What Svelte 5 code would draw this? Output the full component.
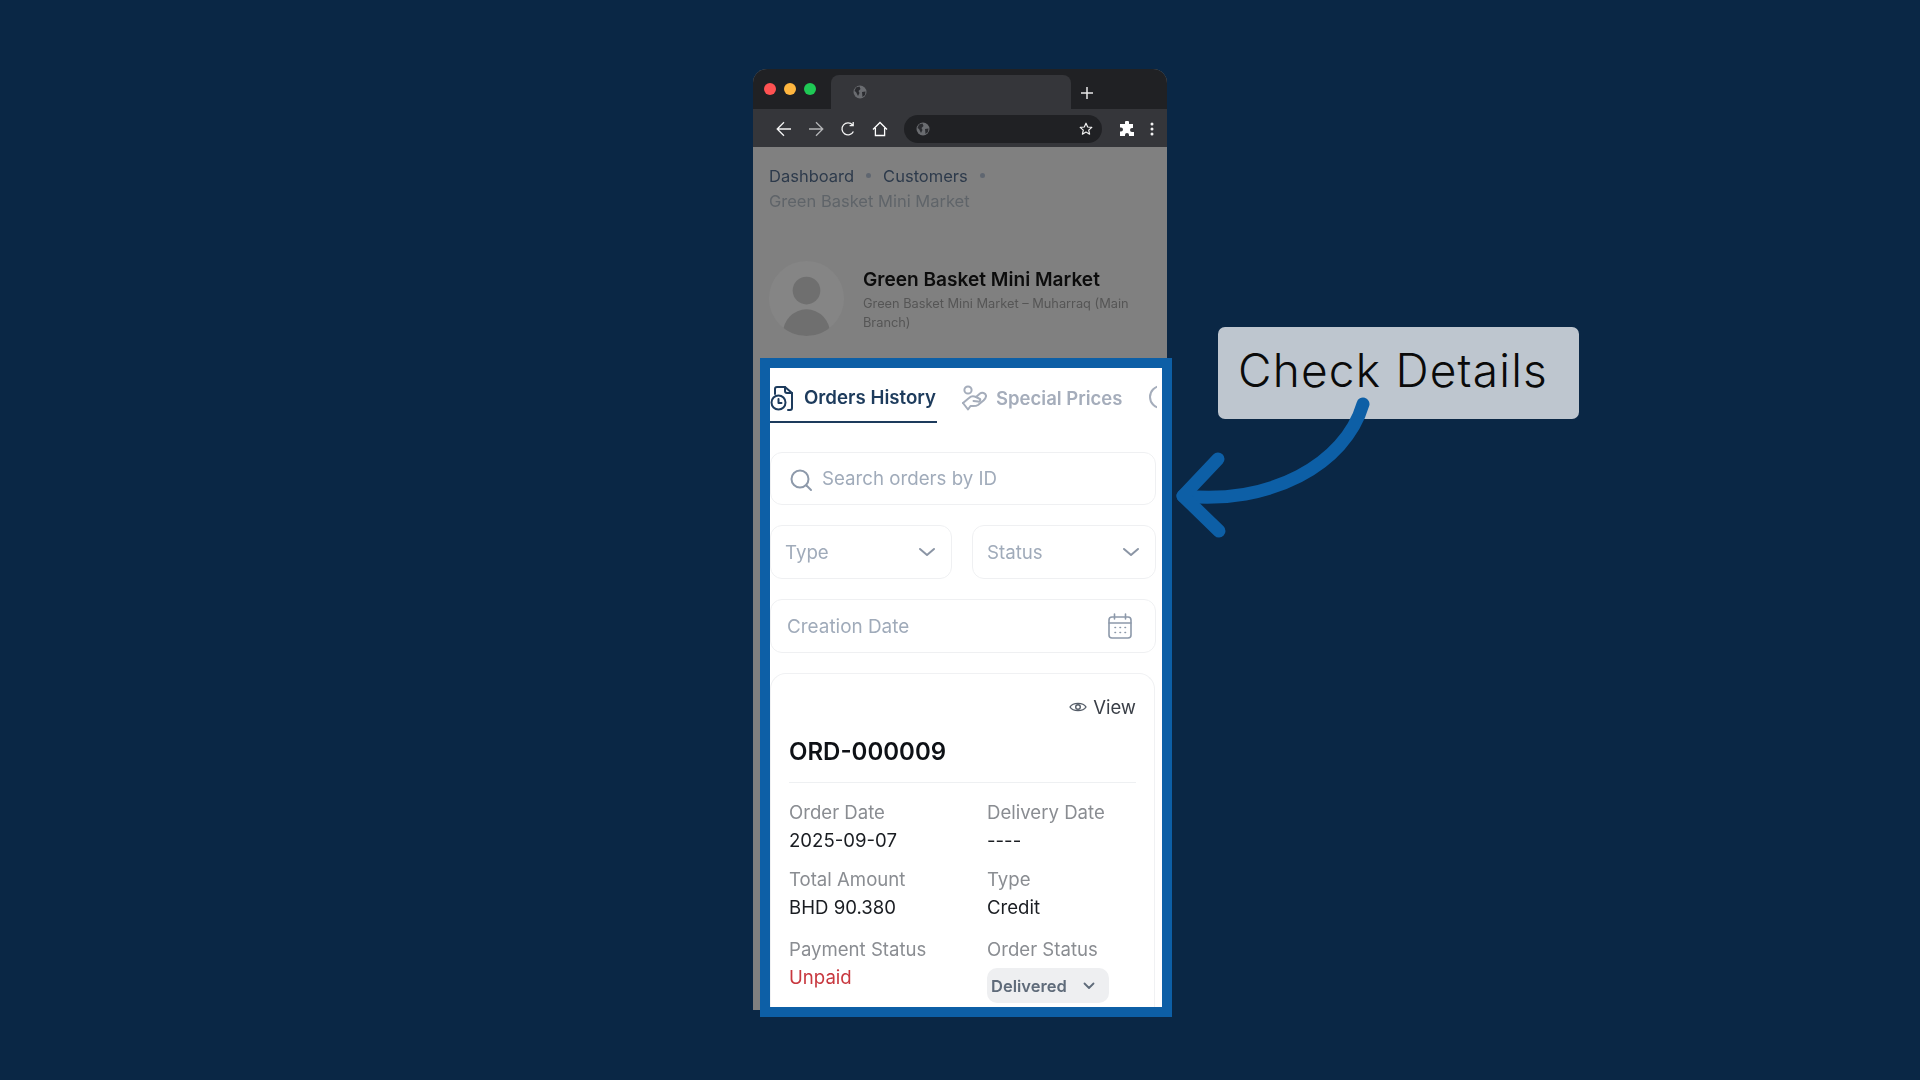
<script>
  const fields = [
    { label: 'Order Date', value: '2025-09-07' },
    { label: 'Delivery Date', value: '----' },
    { label: 'Total Amount', value: 'BHD 90.380' },
    { label: 'Type', value: 'Credit' },
  ];
</script>

{#snippet globe()}
  <svg class="globe" viewBox="0 0 14 14" width="14" height="14">
    <circle cx="7" cy="7" r="6.5" fill="#6a6c70" />
    <path d="M3 2.5 L6.5 1.5 L7.5 4 L5.5 6 L6.5 8 L5 11 L3 7 L1.5 6 Z M9 7 L12.5 6.5 L12 10 L9.5 12 Z" fill="#2b2c30" />
  </svg>
{/snippet}

{#snippet chevron()}
  <svg viewBox="0 0 18 10" width="18" height="10" fill="none" stroke="#8b95a5" stroke-width="2" stroke-linecap="round" stroke-linejoin="round">
    <path d="M2 2 L9 8 L16 2" />
  </svg>
{/snippet}

<div class="slide">
  <div class="browser">
    <div class="titlebar">
      <div class="lights">
        <span class="light red"></span>
        <span class="light yellow"></span>
        <span class="light green"></span>
      </div>
      <div class="tab">{@render globe()}</div>
      <svg class="plus" viewBox="0 0 12 12" width="12" height="12" stroke="#e8e8e8" stroke-width="1.5">
        <path d="M6 0 V12 M0 6 H12" />
      </svg>
    </div>
    <div class="toolbar">
      <svg viewBox="0 0 16 16" width="16" height="16" fill="none" stroke="#f2f2f2" stroke-width="1.3">
        <path d="M15 8 H1.5 M8 1.2 L1.2 8 L8 14.8" />
      </svg>
      <svg viewBox="0 0 16 16" width="16" height="16" fill="none" stroke="#b5b6b8" stroke-width="1.3">
        <path d="M1 8 H14.5 M8 1.2 L14.8 8 L8 14.8" />
      </svg>
      <svg viewBox="0 0 16 16" width="16" height="16" fill="none" stroke="#f2f2f2" stroke-width="1.3">
        <path d="M13.4 10.5 A6 6 0 1 1 12.6 4 M13.2 1 V4.6 H9.6" />
      </svg>
      <svg viewBox="0 0 16 16" width="16" height="16" fill="none" stroke="#fff" stroke-width="1.3">
        <path d="M1 8.5 L8 1.5 L15 8.5 M3.4 7 V14.5 H12.6 V7" />
      </svg>
      <div class="address">
        {@render globe()}
        <svg class="star" viewBox="0 0 14 14" width="14" height="14" fill="none" stroke="#f2f2f2" stroke-width="1.2" stroke-linejoin="round">
          <path d="M7 1.2 L8.7 5 L12.8 5.4 L9.7 8.1 L10.6 12.2 L7 10.1 L3.4 12.2 L4.3 8.1 L1.2 5.4 L5.3 5 Z" />
        </svg>
      </div>
      <svg class="puzzle" viewBox="0 0 16 16" width="16" height="16" fill="#fff">
        <path d="M6 1.5 a2 2 0 0 1 4 0 V3 H14 V7 h-1 a2 2 0 0 0 0 4 h2 V15 H10 V14 a2 2 0 0 0 -4 0 V15 H1 V10.5 h1 a2 2 0 0 0 0 -4 H1 V3 H6 Z" />
      </svg>
      <svg class="dots" viewBox="0 0 4 14" width="4" height="14" fill="#f2f2f2">
        <circle cx="2" cy="2" r="1.5" /><circle cx="2" cy="7" r="1.5" /><circle cx="2" cy="12" r="1.5" />
      </svg>
    </div>
    <div class="page">
      <nav class="crumbs">
        <span>Dashboard</span><i></i><span>Customers</span><i></i>
        <span class="current">Green Basket Mini Market</span>
      </nav>
      <div class="customer">
        <svg class="avatar" viewBox="0 0 76 76" width="75" height="75">
          <defs><clipPath id="avatar-clip"><circle cx="38" cy="38" r="38" /></clipPath></defs>
          <circle cx="38" cy="38" r="38" fill="#858585" />
          <g clip-path="url(#avatar-clip)" fill="#6f6f6f">
            <circle cx="38" cy="30" r="14" />
            <ellipse cx="38" cy="74" rx="24" ry="25" />
          </g>
        </svg>
        <div class="who">
          <h2>Green Basket Mini Market</h2>
          <p>Green Basket Mini Market – Muharraq (Main Branch)</p>
        </div>
      </div>
    </div>
  </div>

  <section class="spotlight">
    <div class="panel">
      <div class="tabs">
        <div class="tab-item active">
          <svg viewBox="0 0 24 26" width="24" height="26" fill="none" stroke="#1d3b5c" stroke-width="2" stroke-linecap="round" stroke-linejoin="round">
            <path d="M5 9 V4 a2 2 0 0 1 2-2 h8 l7 6 v15 a2 2 0 0 1 -2 2 h-2" />
            <path d="M15 2 v4 a2 2 0 0 0 2 2 h5" />
            <circle cx="8.5" cy="17.5" r="7" />
            <path d="M8.5 14 v4 h3" />
          </svg>
          Orders History
        </div>
        <div class="tab-item">
          <svg viewBox="0 0 26 26" width="26" height="26" fill="none" stroke="#a5adbb" stroke-width="2" stroke-linecap="round" stroke-linejoin="round">
            <circle cx="7" cy="5" r="3.6" />
            <path d="M2 18 L8 13 C10 11 13 11 15 12 L18 13.5 C20 14 19.5 17 17 16.6 L12.5 16" />
            <path d="M15 12 L19 8.5 C21 7 24.5 8 25 10.5 C25.3 12.5 24 14 22.5 15.5 L17 20 C15.5 21 14 21 12 21 L9.5 21 L7 24.5 L2 18" />
          </svg>
          Special Prices
        </div>
        <div class="tab-item more">
          <svg viewBox="0 0 26 26" width="26" height="26" fill="none" stroke="#a5adbb" stroke-width="2" stroke-linecap="round">
            <circle cx="13" cy="13" r="11" />
          </svg>
        </div>
      </div>

      <label class="field search">
        <svg viewBox="0 0 24 24" width="24" height="24" fill="none" stroke="#8d99aa" stroke-width="2" stroke-linecap="round">
          <circle cx="11" cy="11" r="8.5" /><path d="M17.5 17.5 L22 22" />
        </svg>
        <span>Search orders by ID</span>
      </label>

      <div class="selects">
        <div class="field select"><span>Type</span>{@render chevron()}</div>
        <div class="field select"><span>Status</span>{@render chevron()}</div>
      </div>

      <div class="field date">
        <span>Creation Date</span>
        <svg viewBox="0 0 24 26" width="24" height="26" fill="none" stroke="#8d99aa" stroke-width="1.6" stroke-linecap="round">
          <rect x="1" y="4" width="22" height="21" rx="3" />
          <path d="M1 10 H23 M6.5 1 V6 M17.5 1 V6" />
          <path d="M7 14.5 h.5 M12 14.5 h.5 M17 14.5 h.5 M7 19.5 h.5 M12 19.5 h.5 M17 19.5 h.5" />
        </svg>
      </div>

      <article class="card">
        <div class="view">
          <svg viewBox="0 0 18 14" width="18" height="14" fill="none" stroke="#555d68" stroke-width="1.4">
            <path d="M1 7 C4 2.2 14 2.2 17 7 C14 11.8 4 11.8 1 7 Z" />
            <circle cx="9" cy="7" r="2.3" />
          </svg>
          View
        </div>
        <h3>ORD-000009</h3>
        <div class="grid">
          {#each fields as f}
            <div class="cell">
              <span class="label">{f.label}</span>
              <span class="value">{f.value}</span>
            </div>
          {/each}
          <div class="cell last">
            <span class="label">Payment Status</span>
            <span class="value unpaid">Unpaid</span>
          </div>
          <div class="cell last">
            <span class="label">Order Status</span>
            <span class="pill">
              Delivered
              <svg viewBox="0 0 12 8" width="12" height="8" fill="none" stroke="#5f6b7a" stroke-width="1.8" stroke-linecap="round" stroke-linejoin="round">
                <path d="M1.5 1.5 L6 6 L10.5 1.5" />
              </svg>
            </span>
          </div>
        </div>
      </article>
    </div>
  </section>

  <div class="callout">Check Details</div>

  <svg class="arrow" viewBox="0 0 200 140" width="200" height="140" fill="none" stroke="#0d5fa6" stroke-width="13" stroke-linecap="round" stroke-linejoin="round">
    <path d="M193 14 C175 75 100 115 13 106" />
    <path d="M48 69 L13 106 L49 141" />
  </svg>
</div>

<style>
  :global(body) {
    margin: 0;
    background: #0a2745;
  }

  .slide {
    position: relative;
    width: 1920px;
    height: 1080px;
    overflow: hidden;
    background: #0a2745;
    font-family: Inter, "Liberation Sans", sans-serif;
  }

  /* browser mock, free on the slide */
  .browser {
    position: absolute;
    left: 753px;
    top: 69px;
    width: 414px;
    height: 941px;
    display: flex;
    flex-direction: column;
    border-radius: 14px 14px 0 0;
    overflow: hidden;
    background: #808080;
  }

  .titlebar {
    height: 40px;
    display: flex;
    align-items: flex-end;
    background: #202124;
    flex-shrink: 0;
  }

  .lights {
    display: flex;
    gap: 8px;
    align-self: flex-start;
    padding: 14px 0 0 11px;
    width: 67px;
  }

  .light {
    width: 12px;
    height: 12px;
    border-radius: 50%;
  }
  .red { background: #ff5252; }
  .yellow { background: #ffb63f; }
  .green { background: #1fc955; }

  .tab {
    width: 240px;
    height: 34px;
    display: flex;
    align-items: center;
    padding-left: 22px;
    box-sizing: border-box;
    background: #35363a;
    border-radius: 8px 8px 0 0;
  }

  .plus {
    align-self: flex-start;
    margin: 18px 0 0 10px;
  }

  .toolbar {
    height: 38px;
    flex-shrink: 0;
    display: flex;
    align-items: center;
    gap: 16px;
    padding: 2px 0 0 23px;
    box-sizing: border-box;
    background: #35363a;
  }

  .address {
    width: 198px;
    height: 28px;
    display: flex;
    align-items: center;
    justify-content: space-between;
    padding: 0 9px 0 12px;
    box-sizing: border-box;
    border-radius: 14px;
    background: #202124;
  }

  .puzzle { margin-left: 1px; }
  .dots { margin-left: -1px; }

  .page {
    flex: 1;
    padding: 17px 16px 0;
    background: #808080;
    filter: blur(0.35px);
  }

  .crumbs {
    display: flex;
    flex-wrap: wrap;
    align-items: center;
    column-gap: 12px;
    font-size: 16.5px;
    line-height: 25px;
    color: #2d3a4b;
  }

  .crumbs i {
    width: 5px;
    height: 5px;
    border-radius: 50%;
    background: #5f6670;
    margin-top: -2px;
  }

  .crumbs .current {
    width: 100%;
    color: #5f6469;
  }

  .customer {
    display: flex;
    align-items: center;
    gap: 19px;
    margin-top: 47px;
  }

  .avatar { flex-shrink: 0; }

  .who h2 {
    margin: 1px 0 0;
    font-size: 19.1px;
    font-weight: 600;
    line-height: 24px;
    color: #0c0c0c;
  }

  .who p {
    margin: 3px 0 0;
    font-size: 12.8px;
    line-height: 19px;
    color: #555;
  }

  /* highlighted part of the page */
  .spotlight {
    position: absolute;
    left: 760px;
    top: 358px;
    width: 412px;
    height: 659px;
    box-sizing: border-box;
    border: 10px solid #0d5fa6;
    background: #fff;
    overflow: hidden;
  }

  .panel {
    height: 100%;
    filter: blur(0.35px);
  }

  .tabs {
    display: flex;
    gap: 24px;
    width: 387px;
    height: 55px;
    overflow: hidden;
  }

  .tab-item {
    display: flex;
    align-items: center;
    flex-shrink: 0;
    gap: 9px;
    height: 55px;
    box-sizing: border-box;
    padding-top: 5px;
    font-size: 18.5px;
    font-weight: 600;
    color: #a5adbb;
    white-space: nowrap;
  }

  .tab-item.active {
    width: 167px;
    gap: 10px;
    padding-top: 6px;
    font-size: 18.7px;
    color: #1d3b5c;
    border-bottom: 2px solid #1d3b5c;
  }

  .tab-item.more {
    padding-top: 2px;
    margin-left: 2px;
  }

  .field {
    display: flex;
    align-items: center;
    box-sizing: border-box;
    height: 54px;
    border: 1px solid #eff0f2;
    border-radius: 12px;
    font-size: 18.7px;
    color: #a0abba;
  }

  .search {
    width: 386px;
    margin-top: 29px;
    gap: 9px;
    padding-left: 18px;
    height: 53px;
  }

  .search svg { margin-top: 2px; }

  .selects {
    display: grid;
    grid-template-columns: 182px 184px;
    gap: 20px;
    margin-top: 20px;
  }

  .select {
    justify-content: space-between;
    padding: 0 15px 0 14px;
  }

  .date {
    width: 386px;
    margin-top: 20px;
    justify-content: space-between;
    padding: 0 23px 0 16px;
    font-size: 18.9px;
  }

  .card {
    width: 385px;
    box-sizing: border-box;
    margin-top: 20px;
    padding: 0 18px;
    border: 1px solid #f0f1f3;
    border-bottom: 0;
    border-radius: 16px 16px 0 0;
    height: 340px;
  }

  .view {
    display: flex;
    justify-content: flex-end;
    align-items: center;
    gap: 6px;
    padding-top: 21px;
    height: 24px;
    font-size: 18.5px;
    color: #3a3f47;
  }

  h3 {
    margin: 17px 0 0;
    padding-bottom: 15px;
    border-bottom: 1px solid #eef0f2;
    font-size: 24px;
    line-height: 31px;
    font-weight: 600;
    color: #0e1116;
  }

  .grid {
    display: grid;
    grid-template-columns: 198px 1fr;
    margin-top: 16px;
  }

  .cell {
    display: flex;
    flex-direction: column;
    height: 67px;
    font-size: 18.6px;
    line-height: 26px;
  }

  .cell.last { margin-top: 3px; }

  .label { color: #8a8d92; }
  .value { color: #1a1d22; margin-top: 2px; }
  .unpaid { color: #c8383f; }

  .pill {
    display: inline-flex;
    align-items: center;
    justify-content: space-between;
    width: 122px;
    height: 37px;
    margin-top: 6px;
    padding: 0 14px 0 4px;
    box-sizing: border-box;
    border-radius: 10px;
    background: #eeeff1;
    font-size: 16.5px;
    font-weight: 600;
    color: #5f6b7a;
  }

  /* annotation */
  .callout {
    position: absolute;
    left: 1218px;
    top: 327px;
    width: 361px;
    height: 92px;
    box-sizing: border-box;
    padding: 18px 0 0 20px;
    border-radius: 7px;
    background: #bec6cf;
    font-size: 46px;
    line-height: 50px;
    font-weight: 300;
    letter-spacing: 1.2px;
    color: #0a0a0a;
  }

  .arrow {
    position: absolute;
    left: 1170px;
    top: 390px;
    overflow: visible;
  }
</style>
